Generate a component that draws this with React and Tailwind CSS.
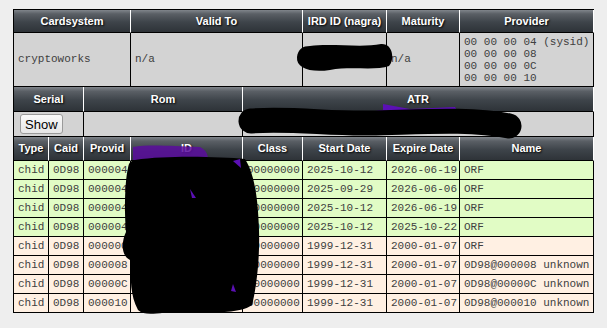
import React from 'react';

const HEAD =
  'flex items-center justify-center border-b border-r border-b-black border-r-white bg-[linear-gradient(to_bottom,#80858b_0%,#5a5f65_18%,#3e444a_55%,#2e3338_100%)] font-["Liberation_Sans",Arial,sans-serif] text-[11px] font-bold text-white [text-shadow:1px_1px_2px_#000]';
const LAST_HEAD = 'border-r-black';
const CELL =
  'flex items-center border-b border-r border-black px-[4px] font-["Liberation_Mono","Courier_New",monospace] text-[11px] text-[#404040] whitespace-pre';

const entitlements = [
  { provid: '000004', start: '2025-10-12', expire: '2026-06-19', name: 'ORF', ok: true },
  { provid: '000004', start: '2025-09-29', expire: '2026-06-06', name: 'ORF', ok: true },
  { provid: '000004', start: '2025-10-12', expire: '2026-06-19', name: 'ORF', ok: true },
  { provid: '000004', start: '2025-10-12', expire: '2025-10-22', name: 'ORF', ok: true },
  { provid: '000000', start: '1999-12-31', expire: '2000-01-07', name: 'ORF', ok: false },
  { provid: '000008', start: '1999-12-31', expire: '2000-01-07', name: '0D98@000008 unknown', ok: false },
  { provid: '00000C', start: '1999-12-31', expire: '2000-01-07', name: '0D98@00000C unknown', ok: false },
  { provid: '000010', start: '1999-12-31', expire: '2000-01-07', name: '0D98@000010 unknown', ok: false },
];

function Blackout() {
  // marker scribbles over the private fields
  return (
    <svg className="pointer-events-none absolute left-0 top-0" width="607" height="328" viewBox="0 0 607 328">
      <path d="M310 46 C330 43 362 48 381 44 C393 43 395 60 389 66 C376 71 350 66 330 70 C310 73 296 68 297 57 C298 49 303 46 310 46 Z" fill="#000" />
      <polygon points="360,113 383,110 383,104 410,109 455,107 458,112 430,116" fill="#5b10b4" />
      <path d="M251 121 C290 118 330 124 370 123 C420 122 470 118 509 126" stroke="#000" strokeWidth="25" strokeLinecap="round" fill="none" />
      <path d="M133 147 C150 144 170 146 200 147 C206 150 208 154 208 160 L133 160 Z" fill="#5a0d9e" fillOpacity="0.85" />
      <path d="M135 160 C170 155 220 157 245 159 C255 175 258 200 259 230 C260 260 256 290 252 305 C240 315 200 312 180 312 C160 312 145 317 138 310 C130 295 131 280 130 260 C120 255 122 240 126 232 C124 210 125 180 128 168 C129 162 131 161 135 160 Z" fill="#000" />
      <polygon points="233,161 240,159 241,168" fill="#5b10b4" />
      <polygon points="190,189 196,198 192,198" fill="#5b10b4" />
      <polygon points="231,291 233,284 236,292" fill="#5b10b4" />
    </svg>
  );
}

export default function App() {
  return (
    <div className="relative min-h-[328px] bg-[#eeeeee] pl-[13px] pt-[9px]">
      <div className="w-[581px]">
        <div className="grid grid-cols-[35px_35px_47px_112px_60px_84px_73px_134px] border-l border-t border-black">
          {/* card info */}
          <div className={`${HEAD} col-span-3 h-[23px]`}>Cardsystem</div>
          <div className={`${HEAD} col-span-2`}>Valid To</div>
          <div className={HEAD}>IRD ID (nagra)</div>
          <div className={HEAD}>Maturity</div>
          <div className={`${HEAD} ${LAST_HEAD}`}>Provider</div>

          <div className={`${CELL} col-span-3 h-[54px] bg-[#d3d3d3]`}>cryptoworks</div>
          <div className={`${CELL} col-span-2 bg-[#d3d3d3]`}>n/a</div>
          <div className={`${CELL} bg-[#d3d3d3]`}></div>
          <div className={`${CELL} bg-[#d3d3d3]`}>n/a</div>
          <div className={`${CELL} flex-col items-start justify-center bg-[#d3d3d3] leading-[12px]`}>
            <span>00 00 00 04 (sysid)</span>
            <span>00 00 00 08</span>
            <span>00 00 00 0C</span>
            <span>00 00 00 10</span>
          </div>

          {/* serial / rom / atr */}
          <div className={`${HEAD} col-span-2 h-[25px]`}>Serial</div>
          <div className={`${HEAD} col-span-2`}>Rom</div>
          <div className={`${HEAD} ${LAST_HEAD} col-span-4`}>ATR</div>

          <div className={`${CELL} col-span-2 h-[25px] bg-[#d3d3d3] px-[6px]`}>
            <button className="h-[20px] rounded-[3px] border border-[#9a9a9a] bg-[linear-gradient(to_bottom,#fafafa,#e6e6e6)] px-[4px] font-['Liberation_Sans',Arial,sans-serif] text-[13px] leading-none text-black">
              Show
            </button>
          </div>
          <div className={`${CELL} col-span-2 bg-[#d3d3d3]`}></div>
          <div className={`${CELL} col-span-4 bg-[#d3d3d3]`}></div>

          {/* entitlements */}
          <div className={`${HEAD} h-[24px]`}>Type</div>
          <div className={HEAD}>Caid</div>
          <div className={HEAD}>Provid</div>
          <div className={HEAD}>ID</div>
          <div className={HEAD}>Class</div>
          <div className={HEAD}>Start Date</div>
          <div className={HEAD}>Expire Date</div>
          <div className={`${HEAD} ${LAST_HEAD}`}>Name</div>

          {entitlements.map((e, i) => {
            const bg = e.ok ? 'bg-[#e1fcc5]' : 'bg-[#fff0e3]';
            return (
              <React.Fragment key={i}>
                <div className={`${CELL} ${bg} h-[19px]`}>chid</div>
                <div className={`${CELL} ${bg}`}>0D98</div>
                <div className={`${CELL} ${bg}`}>{e.provid}</div>
                <div className={`${CELL} ${bg}`}></div>
                <div className={`${CELL} ${bg}`}>00000000</div>
                <div className={`${CELL} ${bg}`}>{e.start}</div>
                <div className={`${CELL} ${bg}`}>{e.expire}</div>
                <div className={`${CELL} ${bg}`}>{e.name}</div>
              </React.Fragment>
            );
          })}
        </div>
      </div>
      <Blackout />
    </div>
  );
}
